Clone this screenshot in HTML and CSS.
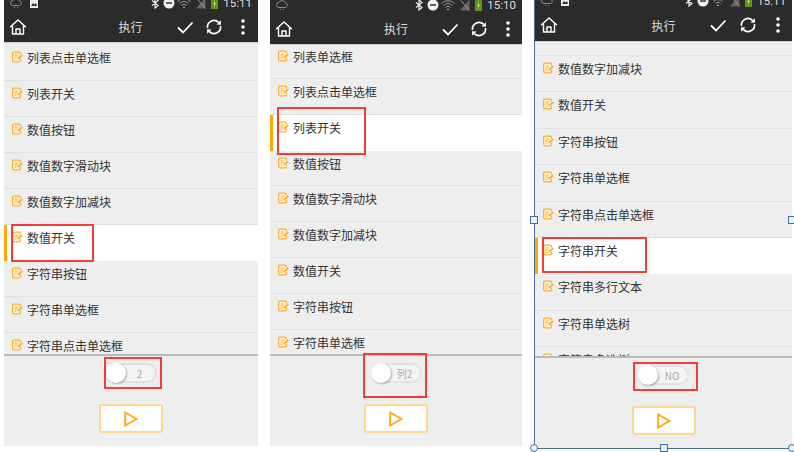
FILE: index.html
```html
<!DOCTYPE html>
<html lang="zh-CN">
<head>
    <meta charset="UTF-8">
    <title>执行</title>
    <link rel="stylesheet" href="styles.css">
</head>
<body>
    <svg class="defs" xmlns="http://www.w3.org/2000/svg">
        <symbol id="i-edit" viewBox="0 0 12 12">
            <path d="M9.200 3.400V2.400C9.200 1.300 8.400.7 7.400.7H2.400C1.300.7.700 1.300.700 2.400v7.200c0 1.100.6 1.700 1.700 1.700h5c1 0 1.800-.6 1.800-1.700V8" fill="#fff6e2" stroke="#ffad2b" stroke-width="1.400"/>
            <path d="M2.800 3.800h4M2.800 6h2.800M2.800 8.400h1.800" stroke="#ffad2b" stroke-width="1.100"/>
            <path d="M5.800 8.800l.4-1.900 4.200-3.700 1.400 1.400-4.200 3.800z" fill="#ffad2b"/>
        </symbol>
        <symbol id="i-home" viewBox="0 0 18 18">
            <path d="M1.500 8.800L9 2l7.500 6.800M3.500 7.500V16h11V7.500M7 16v-5h4v5" fill="none" stroke="#fff" stroke-width="1.400" stroke-linejoin="round" stroke-linecap="round"/>
        </symbol>
        <symbol id="i-check" viewBox="0 0 18 18">
            <path d="M2 9.500l5 5L16.500 4.500" fill="none" stroke="#fff" stroke-width="1.800"/>
        </symbol>
        <symbol id="i-sync" viewBox="0 0 18 18">
            <path d="M2.500 10A6.600 6.600 0 0 1 13.600 4.300M15.500 8A6.600 6.600 0 0 1 4.400 13.700" fill="none" stroke="#fff" stroke-width="1.600"/>
            <path d="M11.500 6.500L16 6.800l-.2-4.600zM6.500 11.500L2 11.200l.2 4.600z" fill="#fff"/>
        </symbol>
        <symbol id="i-dots" viewBox="0 0 18 18">
            <circle cx="9" cy="3" r="1.800" fill="#fff"/>
            <circle cx="9" cy="9" r="1.800" fill="#fff"/>
            <circle cx="9" cy="15" r="1.800" fill="#fff"/>
        </symbol>
        <symbol id="i-play" viewBox="0 0 14 16">
            <path d="M1.200 1.500L12.500 8 1.200 14.500z" fill="none" stroke="#ffa91f" stroke-width="2"/>
        </symbol>
        <symbol id="i-cloud" viewBox="0 0 12 12">
            <path d="M3 8.500a2.500 2.500 0 0 1 0-5 3.500 3.500 0 0 1 6.500.5 2.300 2.300 0 0 1 0 4.500z" fill="none" stroke="#8a8a8a" stroke-width="1"/>
            <path d="M4 10.500h1M7 10.500h1" stroke="#8a8a8a"/>
        </symbol>
        <symbol id="i-pic" viewBox="0 0 10 12">
            <path d="M1 1h8v10H1z" fill="#eee"/>
            <path d="M2 9l2-3 1.500 1.500L7 6l1 3z" fill="#333"/>
        </symbol>
        <symbol id="i-bt" viewBox="0 0 8 12">
            <path d="M1 3.500l6 5-3 2.500V1l3 2.500-6 5" fill="none" stroke="#eee" stroke-width="1.200"/>
        </symbol>
        <symbol id="i-dnd" viewBox="0 0 12 12">
            <circle cx="6" cy="6" r="5.500" fill="#f2f2f2"/>
            <path d="M3 6h6" stroke="#333" stroke-width="1.500"/>
        </symbol>
        <symbol id="i-wifi" viewBox="0 0 14 12">
            <path d="M.5 4.500a9 9 0 0 1 13 0M2.500 6.500a6.200 6.200 0 0 1 9 0M4.500 8.500a3.400 3.400 0 0 1 5 0" fill="none" stroke="#999" stroke-width="1"/>
            <path d="M5.800 10a1.700 1.700 0 0 1 2.400 0L7 11.500z" fill="#bbb"/>
        </symbol>
        <symbol id="i-signal" viewBox="0 0 10 12">
            <path d="M0 11.500L9.500.5v11z" fill="#666"/>
            <path d="M0 .5l9.500 11" stroke="#999"/>
        </symbol>
        <symbol id="i-batt" viewBox="0 0 7 12">
            <path d="M2 0h3v1.200h2V12H0V1.200h2z" fill="#5d9a12"/>
            <path d="M3.800 3L2.400 6.800h1.200L3 10l1.800-4H3.500z" fill="#e4f0c8"/>
        </symbol>
    </svg>

    <div class="page">
        <div class="phone phone-a">
            <div class="status">
                <svg class="st-icon"><use href="#i-cloud"/></svg>
                <svg class="st-icon st-pic"><use href="#i-pic"/></svg>
                <span class="st-fill"></span>
                <svg class="st-bt"><use href="#i-bt"/></svg>
                <svg class="st-icon"><use href="#i-dnd"/></svg>
                <svg class="st-wifi"><use href="#i-wifi"/></svg>
                <svg class="st-sig"><use href="#i-signal"/></svg>
                <svg class="st-batt"><use href="#i-batt"/></svg>
                <span class="time">15:11</span>
            </div>
            <div class="toolbar">
                <svg class="tb-icon"><use href="#i-home"/></svg>
                <span class="title">执行</span>
                <div class="actions">
                    <svg class="tb-icon"><use href="#i-check"/></svg>
                    <svg class="tb-icon"><use href="#i-sync"/></svg>
                    <svg class="tb-icon"><use href="#i-dots"/></svg>
                </div>
            </div>
            <div class="list">
                <div class="row"><svg class="edit"><use href="#i-edit"/></svg>列表点击单选框</div>
                <div class="row"><svg class="edit"><use href="#i-edit"/></svg>列表开关</div>
                <div class="row"><svg class="edit"><use href="#i-edit"/></svg>数值按钮</div>
                <div class="row"><svg class="edit"><use href="#i-edit"/></svg>数值数字滑动块</div>
                <div class="row"><svg class="edit"><use href="#i-edit"/></svg>数值数字加减块</div>
                <div class="row selected"><svg class="edit"><use href="#i-edit"/></svg>数值开关</div>
                <div class="row"><svg class="edit"><use href="#i-edit"/></svg>字符串按钮</div>
                <div class="row"><svg class="edit"><use href="#i-edit"/></svg>字符串单选框</div>
                <div class="row"><svg class="edit"><use href="#i-edit"/></svg>字符串点击单选框</div>
            </div>
            <div class="footer">
                <div class="toggle"><span class="knob"></span><span class="val">2</span></div>
                <button class="run"><svg class="play"><use href="#i-play"/></svg></button>
            </div>
            <div class="mark mark-a1"></div>
            <div class="mark mark-a2"></div>
        </div>

        <div class="phone phone-b">
            <div class="status">
                <svg class="st-icon"><use href="#i-cloud"/></svg>
                <span class="st-fill"></span>
                <svg class="st-bt"><use href="#i-bt"/></svg>
                <svg class="st-icon"><use href="#i-dnd"/></svg>
                <svg class="st-wifi"><use href="#i-wifi"/></svg>
                <svg class="st-sig"><use href="#i-signal"/></svg>
                <svg class="st-batt"><use href="#i-batt"/></svg>
                <span class="time">15:10</span>
            </div>
            <div class="toolbar">
                <svg class="tb-icon"><use href="#i-home"/></svg>
                <span class="title">执行</span>
                <div class="actions">
                    <svg class="tb-icon"><use href="#i-check"/></svg>
                    <svg class="tb-icon"><use href="#i-sync"/></svg>
                    <svg class="tb-icon"><use href="#i-dots"/></svg>
                </div>
            </div>
            <div class="list">
                <div class="row"><svg class="edit"><use href="#i-edit"/></svg>列表单选框</div>
                <div class="row"><svg class="edit"><use href="#i-edit"/></svg>列表点击单选框</div>
                <div class="row selected"><svg class="edit"><use href="#i-edit"/></svg>列表开关</div>
                <div class="row"><svg class="edit"><use href="#i-edit"/></svg>数值按钮</div>
                <div class="row"><svg class="edit"><use href="#i-edit"/></svg>数值数字滑动块</div>
                <div class="row"><svg class="edit"><use href="#i-edit"/></svg>数值数字加减块</div>
                <div class="row"><svg class="edit"><use href="#i-edit"/></svg>数值开关</div>
                <div class="row"><svg class="edit"><use href="#i-edit"/></svg>字符串按钮</div>
                <div class="row"><svg class="edit"><use href="#i-edit"/></svg>字符串单选框</div>
            </div>
            <div class="footer">
                <div class="toggle"><span class="knob"></span><span class="val">列2</span></div>
                <button class="run"><svg class="play"><use href="#i-play"/></svg></button>
            </div>
            <div class="mark mark-b1"></div>
            <div class="mark mark-b2"></div>
        </div>

        <div class="phone-wrap">
            <div class="phone phone-c">
                <div class="status">
                    <svg class="st-icon"><use href="#i-cloud"/></svg>
                    <svg class="st-icon st-pic"><use href="#i-pic"/></svg>
                    <span class="st-fill"></span>
                    <svg class="st-bt"><use href="#i-bt"/></svg>
                    <svg class="st-icon"><use href="#i-dnd"/></svg>
                    <svg class="st-wifi"><use href="#i-wifi"/></svg>
                    <svg class="st-sig"><use href="#i-signal"/></svg>
                    <svg class="st-batt"><use href="#i-batt"/></svg>
                    <span class="time">15:11</span>
                </div>
                <div class="toolbar">
                    <svg class="tb-icon"><use href="#i-home"/></svg>
                    <span class="title">执行</span>
                    <div class="actions">
                        <svg class="tb-icon"><use href="#i-check"/></svg>
                        <svg class="tb-icon"><use href="#i-sync"/></svg>
                        <svg class="tb-icon"><use href="#i-dots"/></svg>
                    </div>
                </div>
                <div class="list">
                    <div class="row row-top"></div>
                    <div class="row"><svg class="edit"><use href="#i-edit"/></svg>数值数字加减块</div>
                    <div class="row"><svg class="edit"><use href="#i-edit"/></svg>数值开关</div>
                    <div class="row"><svg class="edit"><use href="#i-edit"/></svg>字符串按钮</div>
                    <div class="row"><svg class="edit"><use href="#i-edit"/></svg>字符串单选框</div>
                    <div class="row"><svg class="edit"><use href="#i-edit"/></svg>字符串点击单选框</div>
                    <div class="row selected"><svg class="edit"><use href="#i-edit"/></svg>字符串开关</div>
                    <div class="row"><svg class="edit"><use href="#i-edit"/></svg>字符串多行文本</div>
                    <div class="row"><svg class="edit"><use href="#i-edit"/></svg>字符串单选树</div>
                    <div class="row"><svg class="edit"><use href="#i-edit"/></svg>字符串多选树</div>
                </div>
                <div class="footer">
                    <div class="toggle"><span class="knob"></span><span class="val">NO</span></div>
                    <button class="run"><svg class="play"><use href="#i-play"/></svg></button>
                </div>
                <div class="mark mark-c1"></div>
                <div class="mark mark-c2"></div>
            </div>
            <span class="handle h-left"></span>
            <span class="handle h-right"></span>
            <span class="handle round h-bl"></span>
            <span class="handle h-bm"></span>
            <span class="handle round h-br"></span>
        </div>
    </div>
</body>
</html>
```

FILE: styles.css
```css
html, body {
    margin: 0;
    padding: 0;
    background: #fff;
}
.defs {
    display: none;
}
.page {
    display: flex;
    align-items: flex-start;
    width: 794px;
    height: 452px;
    overflow: hidden;
    font-family: "Noto Sans CJK SC", "Liberation Sans", sans-serif;
}
.phone {
    position: relative;
    display: flex;
    flex-direction: column;
    height: 446px;
    overflow: hidden;
    background: #eeeeee;
}
.phone-a {
    width: 254px;
    margin-left: 4px;
}
.phone-b {
    width: 252px;
    margin-left: 12px;
}
.phone-wrap {
    position: relative;
    width: 257px;
    height: 448px;
    margin-left: 12px;
    border-left: 1px solid #4a6f9c;
    border-bottom: 1px solid #4a6f9c;
}
.phone-c {
    width: 257px;
    height: 448px;
}

/* status bar */
.status {
    display: flex;
    align-items: center;
    flex: none;
    height: 16px;
    padding: 0 6px;
    background: #2b2b2b;
}
.phone-a .status {
    margin-top: -5px;
}
.phone-b .status {
    margin-top: -3px;
}
.phone-c .status {
    margin-top: -7px;
}
.st-fill {
    flex: 1;
}
.st-icon {
    width: 12px;
    height: 12px;
    margin-right: 2px;
}
.st-pic {
    width: 10px;
    margin-left: 5px;
}
.st-bt {
    width: 8px;
    height: 12px;
    margin-right: 4px;
}
.st-wifi {
    width: 14px;
    height: 12px;
}
.st-sig {
    width: 10px;
    height: 12px;
    margin-left: 5px;
}
.st-batt {
    width: 7px;
    height: 12px;
    margin-left: 5px;
}
.time {
    margin-left: 5px;
    font-family: Roboto, sans-serif;
    font-size: 11.5px;
    line-height: 10px;
    color: #dddddd;
}

/* toolbar */
.toolbar {
    display: grid;
    grid-template-columns: 1fr auto 1fr;
    align-items: center;
    flex: none;
    height: 31px;
    padding: 0 5px;
    background: #2b2b2b;
}
.phone-a .toolbar {
    padding-right: 6px;
}
.phone-c .toolbar {
    height: 32px;
}
.tb-icon {
    width: 18px;
    height: 18px;
}
.title {
    font-size: 12px;
    color: #dddddd;
}
.actions {
    display: flex;
    justify-content: flex-end;
    gap: 11px;
}
.phone-c .actions {
    gap: 12px;
}

/* list */
.list {
    flex: 1;
    min-height: 0;
    overflow: hidden;
    border-top: 1px solid #d0d0d0;
}
.phone-a .list {
    padding-top: 2px;
}
.row {
    display: flex;
    align-items: flex-start;
    box-sizing: border-box;
    height: 36px;
    padding: 6px 0 0 8px;
    font-size: 12px;
    line-height: 14px;
    color: #333333;
    border-bottom: 1px solid #e0e0e0;
}
.phone-b .row {
    height: 35.8px;
}
.phone-b .row:first-child {
    height: 34px;
    padding-top: 5px;
}
.phone-c .row {
    height: 36.4px;
}
.phone-c .row-top {
    height: 14px;
}
.row.selected {
    padding-left: 5px;
    background: #ffffff;
    border-left: 3px solid #ffa800;
    border-bottom: none;
}
.edit {
    flex: none;
    width: 11px;
    height: 12px;
    margin-right: 4px;
}

/* footer */
.footer {
    display: flex;
    flex-direction: column;
    align-items: center;
    flex: none;
    padding: 7px 0 13px;
    border-top: 2px solid #bbbbbb;
}
.toggle {
    display: flex;
    align-items: center;
    box-sizing: border-box;
    width: 51px;
    height: 20px;
    background: #f4f4f4;
    border: 2px solid #e2e2e2;
    border-radius: 10px;
}
.knob {
    flex: none;
    width: 20px;
    height: 20px;
    margin-left: -2px;
    background: #ffffff;
    border-radius: 50%;
    box-shadow: 1px 1px 2px rgba(0, 0, 0, 0.3);
}
.val {
    flex: 1;
    padding-right: 1px;
    text-align: center;
    font-size: 10px;
    color: #aaaaaa;
}
.run {
    display: flex;
    align-items: center;
    justify-content: center;
    width: 64px;
    height: 29px;
    margin-top: 21px;
    padding: 0;
    background: #ffffff;
    border: 2px solid #ffd88f;
    border-radius: 3px;
}
.play {
    width: 14px;
    height: 16px;
}

/* red annotation boxes over the screenshot */
.mark {
    position: absolute;
    box-sizing: border-box;
    border: 2px solid #f53c3c;
}
.mark-a1 {
    left: 7px;
    top: 224px;
    width: 83px;
    height: 38px;
}
.mark-a2 {
    left: 100px;
    top: 357px;
    width: 58px;
    height: 32px;
}
.mark-b1 {
    left: 7px;
    top: 107px;
    width: 89px;
    height: 48px;
}
.mark-b2 {
    left: 93px;
    top: 353px;
    width: 64px;
    height: 45px;
}
.mark-c1 {
    left: 7px;
    top: 237px;
    width: 105px;
    height: 36px;
}
.mark-c2 {
    left: 98px;
    top: 362px;
    width: 65px;
    height: 29px;
}

/* selection handles of the drawing tool */
.handle {
    position: absolute;
    box-sizing: border-box;
    width: 8px;
    height: 8px;
    background: #e6f4fb;
    border: 1px solid #4a6f9c;
}
.handle.round {
    border-radius: 50%;
}
.h-left {
    left: -5px;
    top: 216px;
}
.h-right {
    left: 253px;
    top: 216px;
}
.h-bl {
    left: -5px;
    top: 444px;
}
.h-bm {
    left: 125px;
    top: 444px;
}
.h-br {
    left: 253px;
    top: 444px;
}
```
